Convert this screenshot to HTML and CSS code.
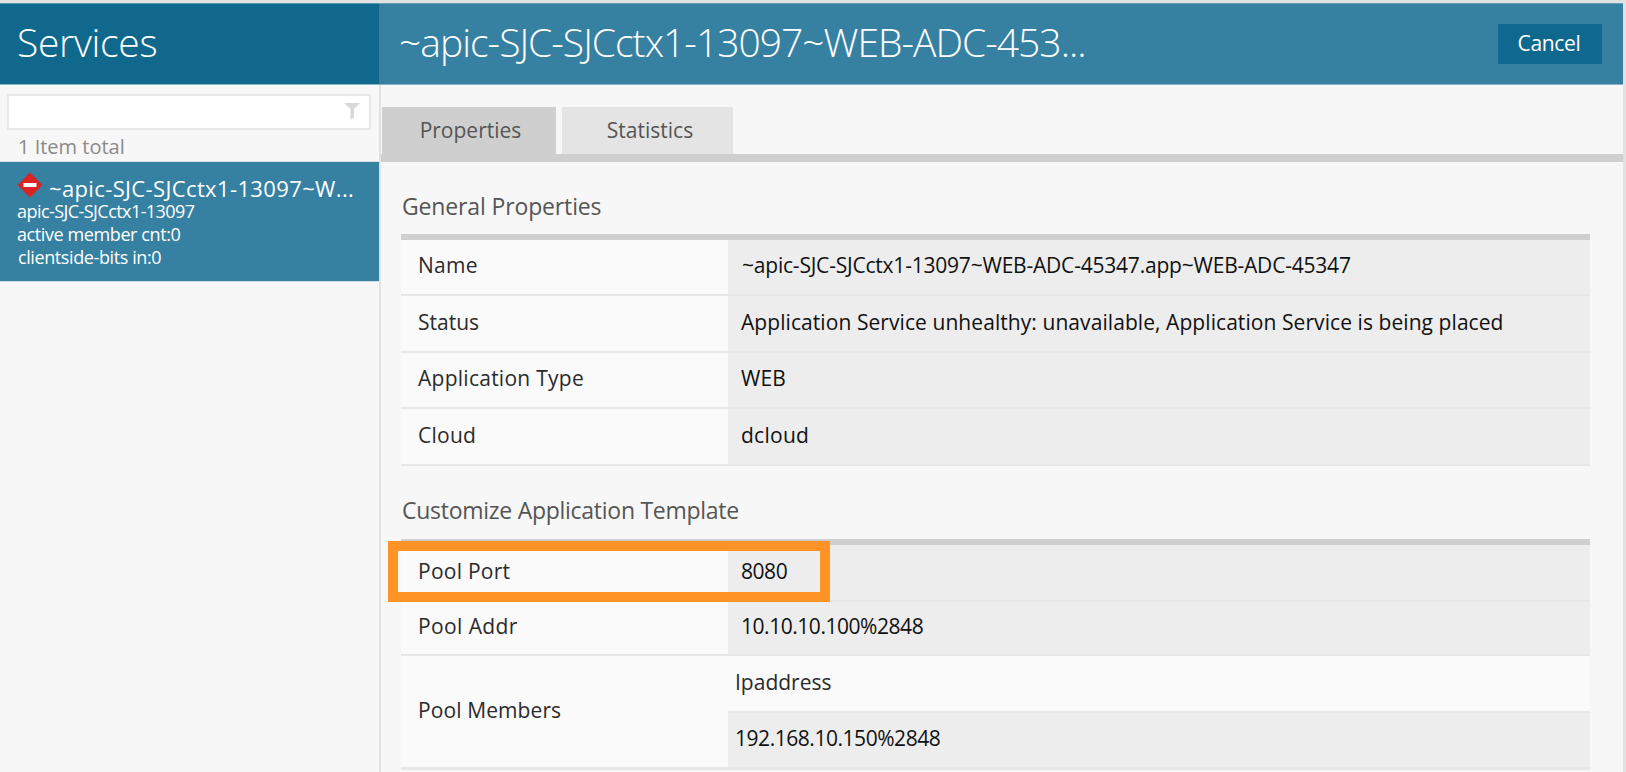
FILE: index.html
```
<!DOCTYPE html>
<html lang="en">
<head>
<meta charset="utf-8">
<title>Services</title>
<link rel="stylesheet" href="styles.css">
</head>
<body>
<div class="app">
  <aside class="sidebar">
    <header class="sidebar-head"><h1 class="title">Services</h1></header>
    <div class="filter">
      <svg class="funnel" width="16" height="17" viewBox="0 0 16 17"><path d="M0 0H16L10 6V14.500L6.500 17V6Z" fill="#d9d9d9"/></svg>
    </div>
    <div class="count">1 Item total</div>
    <div class="item">
      <div class="item-title">
        <svg class="status-icon" width="26" height="26" viewBox="0 0 26 26"><path d="M13 1.500L24.500 13L13 24.500L1.500 13Z" fill="#d92522" stroke="#d92522" stroke-width="1.500" stroke-linejoin="round"/><rect x="6.500" y="11" width="13" height="4" fill="#fff"/></svg>
        <span class="item-name">~apic-SJC-SJCctx1-13097~W...</span>
      </div>
      <div class="item-line tight">apic-SJC-SJCctx1-13097</div>
      <div class="item-line">active member cnt:0</div>
      <div class="item-line last">clientside-bits in:0</div>
    </div>
  </aside>
  <main class="main">
    <header class="main-head">
      <h2 class="title long">~apic-SJC-SJCctx1-13097~WEB-ADC-453...</h2>
      <button class="cancel">Cancel</button>
    </header>
    <nav class="tabs">
      <div class="tab active">Properties</div>
      <div class="tab">Statistics</div>
    </nav>
    <section class="section general">
      <h3 class="heading">General Properties</h3>
      <div class="table">
        <div class="row"><div class="label">Name</div><div class="value name">~apic-SJC-SJCctx1-13097~WEB-ADC-45347.app~WEB-ADC-45347</div></div>
        <div class="row tall"><div class="label flat">Status</div><div class="value">Application Service unhealthy: unavailable, Application Service is being placed</div></div>
        <div class="row"><div class="label">Application Type</div><div class="value">WEB</div></div>
        <div class="row tall"><div class="label">Cloud</div><div class="value wide">dcloud</div></div>
      </div>
    </section>
    <section class="section template">
      <h3 class="heading narrow">Customize Application Template</h3>
      <div class="table">
        <div class="row tall"><div class="label">Pool Port</div><div class="value digits">8080</div></div>
        <div class="row short"><div class="label addr">Pool Addr</div><div class="value digits">10.10.10.100%2848</div></div>
        <div class="row members">
          <div class="label snug">Pool Members</div>
          <div class="nested">
            <div class="nested-head">Ipaddress</div>
            <div class="nested-value digits">192.168.10.150%2848</div>
          </div>
        </div>
        <div class="highlight"></div>
      </div>
    </section>
  </main>
</div>
</body>
</html>
```
FILE: styles.css
```
* { box-sizing: border-box; }

body {
  margin: 0;
  background: #e2e2e2;
  font-family: "Open Sans", sans-serif;
  font-size: 21px;
  color: #2b2b2b;
  overflow: hidden;
}

.app {
  display: flex;
  width: 1623px;
  height: 772px;
  padding-top: 3px;
  overflow: hidden;
}

/* Sidebar */
.sidebar {
  width: 379px;
  background: #f7f7f7;
}

.sidebar-head {
  height: 82px;
  padding-left: 17px;
  background: #11688d;
  border-top: 1px solid #5796b0;
  border-bottom: 1px solid #86b3c7;
}

.title {
  margin: 0;
  font-size: 39px;
  font-weight: 300;
  line-height: 76px;
  color: #fff;
  letter-spacing: -0.3px;
  white-space: nowrap;
}

.title.long { letter-spacing: -0.98px; }

.filter {
  display: flex;
  justify-content: flex-end;
  width: 364px;
  height: 36px;
  margin: 9px 0 0 7px;
  padding: 7px 9px 0 0;
  background: #fff;
  border: 2px solid #e8e8e8;
}

.count {
  height: 32px;
  padding-left: 18px;
  font-size: 20px;
  line-height: 34px;
  color: #8a8a8a;
  border-bottom: 1px solid #dedede;
}

.item {
  height: 120px;
  padding: 10px 0 0 17px;
  background: #3680a2;
  border-bottom: 1px solid #cfdde4;
  color: #fff;
  white-space: nowrap;
}

.item-title {
  display: flex;
  height: 28px;
}

.status-icon { flex: none; }

.item-name {
  margin-left: 6px;
  font-size: 22px;
  line-height: 33px;
  letter-spacing: 0.37px;
}

.item-line {
  height: 23px;
  font-size: 18px;
  line-height: 23px;
  letter-spacing: -0.4px;
}

.item-line.tight { letter-spacing: -0.56px; }
.item-line.last { padding-left: 1px; }

/* Main area */
.main {
  width: 1244px;
  background: #f7f7f7;
  border-left: 2px solid #e1e1e1;
}

.main-head {
  display: flex;
  justify-content: space-between;
  height: 82px;
  margin-left: -2px;
  padding: 0 21px 0 20px;
  background: #3680a2;
  border-top: 1px solid #69a1ba;
  border-bottom: 1px solid #86b3c7;
}

.cancel {
  width: 104px;
  height: 40px;
  margin-top: 20px;
  padding: 0 2px 3px 0;
  border: 0;
  background: #0f688d;
  color: #fff;
  font: inherit;
  letter-spacing: -0.33px;
}

.tabs {
  display: flex;
  gap: 6px;
  height: 77px;
  padding: 22px 0 0 1px;
  border-bottom: 8px solid #cfcfcf;
}

.tab {
  width: 171px;
  height: 47px;
  padding-left: 5px;
  background: #e4e4e4;
  color: #555;
  line-height: 46px;
  text-align: center;
}

.tab.active {
  width: 174px;
  padding-left: 3px;
  background: #cfcfcf;
}

.section { padding-left: 20px; }
.general { height: 304px; padding-top: 26px; }
.template { padding-top: 26px; }

.heading {
  height: 46px;
  margin: 0;
  padding-left: 1px;
  font-size: 23px;
  font-weight: 400;
  line-height: 36px;
  color: #555;
  letter-spacing: -0.14px;
}

.heading.narrow { letter-spacing: -0.27px; }

.template .heading { height: 47px; }

.table {
  position: relative;
  width: 1189px;
  border-top: 6px solid #cfcfcf;
}

.row {
  display: flex;
  height: 56px;
  border-bottom: 2px solid #e7e7e7;
  white-space: nowrap;
}

.row.tall { height: 57px; }
.row.short { height: 54px; }
.row.members { height: 114px; border-bottom-width: 3px; }

.label {
  display: flex;
  align-items: center;
  width: 327px;
  padding: 0 0 4px 17px;
  background: #fafafa;
  letter-spacing: 0.26px;
}

.label.flat { letter-spacing: 0; }
.label.addr { letter-spacing: 0.4px; }
.label.snug { letter-spacing: 0.1px; }

.value {
  display: flex;
  align-items: center;
  flex: 1;
  padding: 0 0 4px 13px;
  background: #ededed;
  color: #111;
  letter-spacing: 0.07px;
}

.value.name {
  padding-left: 14px;
  letter-spacing: -0.21px;
}

.value.wide { letter-spacing: 0.26px; }
.value.digits,
.nested-value.digits { letter-spacing: -0.46px; }

.nested { flex: 1; }

.nested-head,
.nested-value {
  display: flex;
  align-items: center;
  height: 57px;
  padding: 0 0 4px 7px;
}

.nested-head {
  background: #fafafa;
  border-bottom: 2px solid #e7e7e7;
}

.nested-value {
  height: 54px;
  background: #ededed;
  color: #111;
}

/* Frame drawn over the Pool Port row */
.highlight {
  position: absolute;
  left: -13px;
  top: -4px;
  width: 442px;
  height: 61px;
  border: 10px solid #ff9326;
}
```
